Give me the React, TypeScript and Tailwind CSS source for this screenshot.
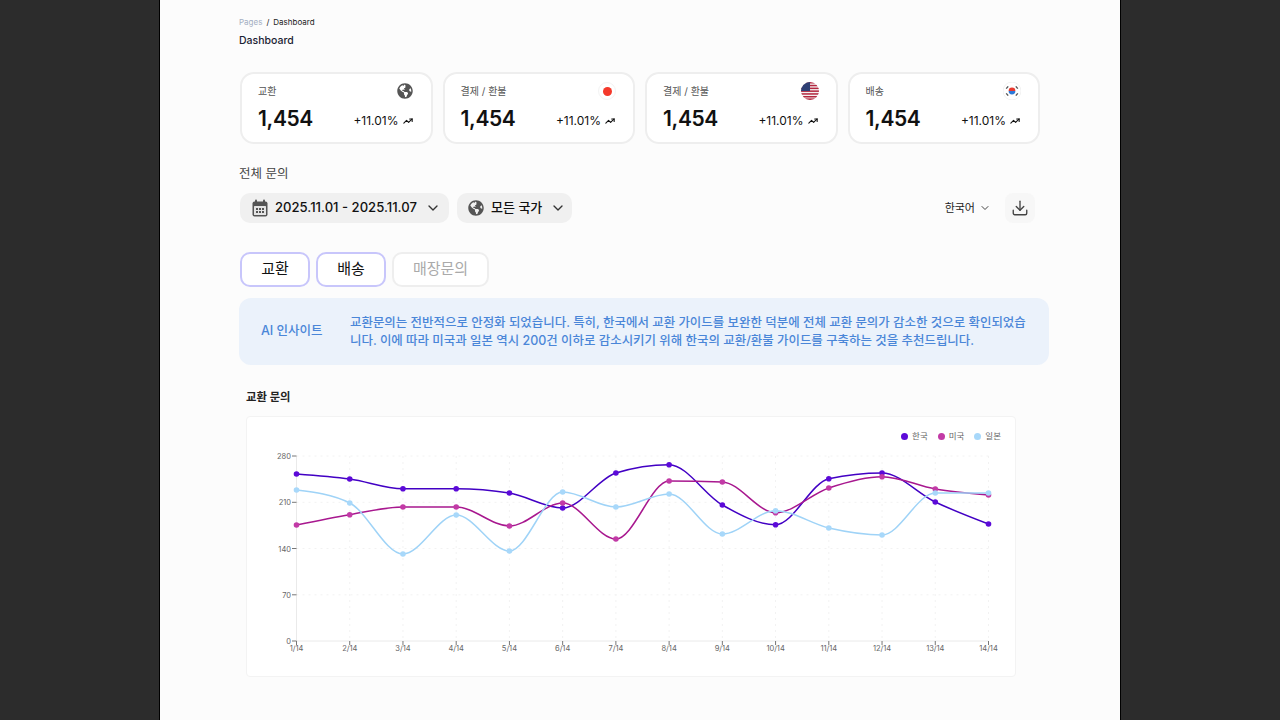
import React from 'react';
import { ChevronDown, Download, TrendingUp } from 'lucide-react';
import { FaGlobeAmericas } from 'react-icons/fa';

const font = { fontFamily: 'Inter, "Noto Sans CJK KR", sans-serif' };

// chart data as pixel positions read off the axis
const xs = Array.from({ length: 14 }, (_, i) => 296.5 + i * (692 / 13));
const labels = xs.map((_, i) => `${i + 1}/14`);

const series = [
  { name: '한국', line: '#4200c4', dot: '#5c0ad8', ys: [474, 479, 488.7, 488.7, 493, 508, 473, 464.7, 505, 524.7, 478.7, 473, 502, 524] },
  { name: '미국', line: '#a8188f', dot: '#c23aa6', ys: [525, 514.7, 507, 507, 526, 503, 539, 481, 482, 512.7, 488, 476.7, 489, 495] },
  { name: '일본', line: '#9fd3f7', dot: '#a8d8fa', ys: [490, 503, 554, 515, 551, 492, 507, 494, 534, 510.7, 528, 535, 493, 493] },
];

// same maths as d3 curveMonotoneX
function monotonePath(px: number[], py: number[]) {
  const n = px.length;
  const d: number[] = [];
  const s: number[] = [];
  for (let i = 0; i < n - 1; i++) s.push((py[i + 1] - py[i]) / (px[i + 1] - px[i]));
  d[0] = s[0];
  d[n - 1] = s[n - 2];
  for (let i = 1; i < n - 1; i++) {
    const h = px[i + 1] - px[i];
    const h0 = px[i] - px[i - 1];
    const p = (s[i - 1] * h + s[i] * h0) / (h0 + h);
    d[i] = (Math.sign(s[i - 1]) + Math.sign(s[i])) * Math.min(Math.abs(s[i - 1]), Math.abs(s[i]), 0.5 * Math.abs(p)) || 0;
  }
  d[0] = (3 * s[0] - d[1]) / 2;
  d[n - 1] = (3 * s[n - 2] - d[n - 2]) / 2;
  let out = `M${px[0]},${py[0]}`;
  for (let i = 0; i < n - 1; i++) {
    const t = (px[i + 1] - px[i]) / 3;
    out += `C${px[i] + t},${py[i] + d[i] * t} ${px[i + 1] - t},${py[i + 1] - d[i + 1] * t} ${px[i + 1]},${py[i + 1]}`;
  }
  return out;
}

function Calendar() {
  return (
    <svg width="16" height="18" viewBox="0 0 16 18">
      <rect x="3" y="0.5" width="2" height="4" rx="1" fill="#555" />
      <rect x="11" y="0.5" width="2" height="4" rx="1" fill="#555" />
      <rect x="0.5" y="2.5" width="15" height="15" rx="2" fill="#555" />
      <rect x="2" y="7" width="12" height="9" rx="0.5" fill="#e4e4e4" />
      {[4, 7, 10].map((x) => [9, 12].map((y) => <rect key={`${x}${y}`} x={x} y={y} width="2" height="2" fill="#555" />))}
    </svg>
  );
}

function UsFlag() {
  return (
    <svg width="18" height="18" viewBox="0 0 18 18">
      <defs>
        <clipPath id="us">
          <circle cx="9" cy="9" r="9" />
        </clipPath>
      </defs>
      <g clipPath="url(#us)">
        <rect width="18" height="18" fill="#f4f0f0" />
        {[0, 2.8, 5.6, 8.4, 11.2, 14].map((y) => (
          <rect key={y} y={y} width="18" height="1.5" fill="#b3263f" />
        ))}
        <rect y="16.4" width="18" height="1.6" fill="#b3263f" />
        <rect width="9" height="9" fill="#2f4075" />
      </g>
    </svg>
  );
}

function KrFlag() {
  return (
    <svg width="18" height="18" viewBox="0 0 18 18">
      <circle cx="9" cy="9" r="9" fill="#fff" stroke="#f2f2f2" />
      <path d="M5.6 9a3.4 3.4 0 0 1 6.8 0z" fill="#e8392f" />
      <path d="M5.6 9a3.4 3.4 0 0 0 6.8 0z" fill="#2d78d8" />
      <g stroke="#555" strokeWidth="1.4" strokeLinecap="butt">
        <path d="M3.2 6.6l2-2.2" />
        <path d="M12.8 4.4l2 2.2" />
        <path d="M3.2 11.4l2 2.2" />
        <path d="M12.8 13.6l2-2.2" />
      </g>
    </svg>
  );
}

function JpFlag() {
  return (
    <div className="flex h-[18px] w-[18px] items-center justify-center rounded-full border border-[#f3f3f3] bg-white">
      <div className="h-[9px] w-[9px] rounded-full bg-[#f4392b]" />
    </div>
  );
}

const cards = [
  { label: '교환', icon: <FaGlobeAmericas size={16} color="#555" /> },
  { label: '결제 / 환불', icon: <JpFlag /> },
  { label: '결제 / 환불', icon: <UsFlag /> },
  { label: '배송', icon: <KrFlag /> },
];

function StatCard({ label, icon }: { label: string; icon: React.ReactNode }) {
  return (
    <div className="h-[72px] w-[192.5px] rounded-[14px] border-2 border-[#eeeeee] bg-white pt-[8px] pl-[16px] pr-[18px]">
      <div className="mr-[-1px] flex h-[18px] items-center justify-between">
        <span className="text-[10px] text-[#555]">{label}</span>
        <span className="flex w-[18px] items-center justify-center">{icon}</span>
      </div>
      <div className="mt-[3px] flex items-center justify-between">
        <span className="text-[21px] leading-[32px] font-semibold tracking-[-0.35px] text-[#111]">1,454</span>
        <span className="mt-[3px] flex items-center gap-[4px] text-[12px] text-[#111]">
          +11.01%
          <TrendingUp size={10} strokeWidth={2.6} />
        </span>
      </div>
    </div>
  );
}

function Chart() {
  return (
    <svg width="768" height="232" viewBox="247 444 768 232" className="block">
      <g stroke="#f2f2f2" strokeDasharray="2 4">
        {[456, 502.3, 548.5, 594.8].map((y) => (
          <line key={y} x1="296.5" x2="988.5" y1={y} y2={y} />
        ))}
        {xs.slice(1).map((x) => (
          <line key={x} x1={x} x2={x} y1="456" y2="641" />
        ))}
      </g>
      <path d="M296.5 456V641H988.5" fill="none" stroke="#eaeaea" />
      {[
        [456, '280'],
        [502.3, '210'],
        [548.5, '140'],
        [594.8, '70'],
        [641, '0'],
      ].map(([y, t]) => (
        <g key={t as string}>
          <line x1="292" x2="296.5" y1={y} y2={y} stroke="#777" />
          <text x="291" y={(y as number) + 3} textAnchor="end" fontSize="7.5" fill="#666">
            {t}
          </text>
        </g>
      ))}
      {xs.map((x, i) => (
        <g key={x}>
          <line x1={x} x2={x} y1="641" y2="645" stroke="#777" />
          <text x={x} y="651" textAnchor="middle" fontSize="7.5" fill="#666">
            {labels[i]}
          </text>
        </g>
      ))}
      {series.map((s) => (
        <g key={s.name}>
          <path d={monotonePath(xs, s.ys)} fill="none" stroke={s.line} strokeWidth="1.5" />
          {s.ys.map((y, i) => (
            <circle key={i} cx={xs[i]} cy={y} r="2.8" fill={s.dot} />
          ))}
        </g>
      ))}
    </svg>
  );
}

export default function App() {
  return (
    <div className="flex h-[720px] justify-center overflow-hidden bg-[#2c2c2c]" style={font}>
      <div className="h-full w-[962px] border-x border-black bg-[#fcfcfc] pl-[79px] pt-[18px]">
        {/* 상단 제목 */}
        <div className="flex h-[8px] items-center gap-1 text-[8px] leading-none">
          <span className="text-[#a3aec2]">Pages</span>
          <span className="text-[#222]">/</span>
          <span className="text-[#222]">Dashboard</span>
        </div>
        <h1 className="mt-[6px] h-[18px] text-[10.5px] leading-[18px] font-medium text-[#1a2233]">Dashboard</h1>

        {/* 통계 카드 */}
        <div className="mt-[22px] ml-[1px] flex w-[800px] justify-between">
          {cards.map((card, i) => (
            <StatCard key={i} label={card.label} icon={card.icon} />
          ))}
        </div>

        <p className="mt-[21px] text-[12.5px] leading-[18px] text-[#444]">전체 문의</p>

        {/* 필터 */}
        <div className="mt-[10px] ml-[1px] flex h-[30px] w-[795px] items-center">
          <button className="flex h-[30px] w-[209px] items-center rounded-[10px] bg-[#f0f0f0] pl-3 text-[13.1px] font-medium text-[#111]">
            <Calendar />
            <span className="ml-[7px]">2025.11.01 - 2025.11.07</span>
            <ChevronDown size={16} className="ml-[8px]" color="#333" />
          </button>
          <button className="ml-2 flex h-[30px] w-[115px] items-center rounded-[10px] bg-[#f0f0f0] pl-[11px] text-[13px] font-medium text-[#111]">
            <FaGlobeAmericas size={16} color="#555" />
            <span className="ml-[7px]">모든 국가</span>
            <ChevronDown size={16} className="ml-[8px]" color="#333" />
          </button>
          <div className="ml-auto flex items-center gap-[4px] text-[11px] text-[#222]">
            한국어
            <ChevronDown size={12} color="#444" />
          </div>
          <button className="ml-[14px] flex h-[30px] w-[30px] items-center justify-center rounded-[8px] bg-[#f7f7f7]">
            <Download size={18} color="#444" strokeWidth={1.8} />
          </button>
        </div>

        {/* 탭 */}
        <div className="mt-[29px] ml-[1px] flex gap-[6px] text-[15px]">
          <button className="h-[35px] w-[70px] rounded-[10px] border-2 border-[#c8c6fb] bg-white text-[#111]">교환</button>
          <button className="h-[35px] w-[70px] rounded-[10px] border-2 border-[#c8c6fb] bg-white text-[#111]">배송</button>
          <button className="h-[35px] w-[97px] rounded-[10px] border-2 border-[#eeeeee] bg-white text-[#aaa]">매장문의</button>
        </div>

        {/* AI 인사이트 */}
        <div className="mt-[11px] flex h-[67px] w-[810px] items-center rounded-[12px] bg-[#ebf2fb] pl-[22px] text-[12.46px] font-medium text-[#4a86d8]">
          <span className="w-[89px] shrink-0 text-[12.5px]">AI 인사이트</span>
          <p className="w-[680px] leading-[18px] break-all">
            교환문의는 전반적으로 안정화 되었습니다. 특히, 한국에서 교환 가이드를 보완한 덕분에 전체 교환 문의가 감소한 것으로 확인되었습니다. 이에 따라 미국과 일본 역시 200건 이하로 감소시키기 위해 한국의 교환/환불 가이드를 구축하는 것을 추천드립니다.
          </p>
        </div>

        <h2 className="mt-[24px] ml-[7px] text-[11.3px] leading-[16px] font-semibold text-[#222]">교환 문의</h2>

        {/* 차트 */}
        <div className="mt-[11px] ml-[7px] h-[261px] w-[770px] rounded-[4px] border border-[#f3f3f3] bg-white">
          <div className="flex h-[27px] items-end justify-end gap-[10px] pr-[14px] pb-[2px] text-[8.5px] leading-[12px] text-[#666]">
            {series.map((s) => (
              <span key={s.name} className="flex items-center gap-[4px]">
                <span className="h-[7px] w-[7px] rounded-full" style={{ backgroundColor: s.dot }} />
                {s.name}
              </span>
            ))}
          </div>
          <Chart />
        </div>
      </div>
    </div>
  );
}
